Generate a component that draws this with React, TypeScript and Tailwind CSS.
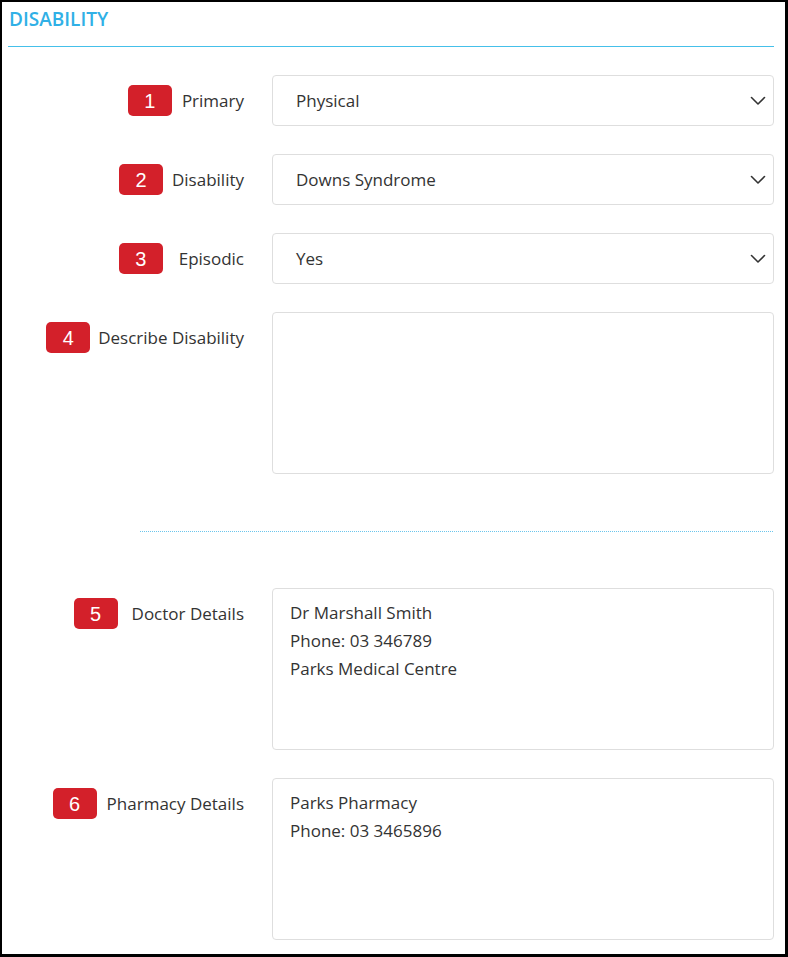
import React from "react";

const font = { fontFamily: '"Open Sans", "Noto Sans", sans-serif' };

function Badge({ n }: { n: number }) {
  return (
    <div
      className="flex h-[31px] w-[44px] items-center justify-center rounded-[5px] bg-[#d3202a] text-[20px] text-white"
      style={{ fontFamily: '"Liberation Sans", Arial, sans-serif' }}
    >
      {n}
    </div>
  );
}

function Label({ n, text, gap }: { n: number; text: string; gap: string }) {
  return (
    <div className="flex w-[242px] shrink-0 justify-end pt-[10px]">
      <div className={`flex h-[31px] items-center ${gap}`}>
        <Badge n={n} />
        <span className="text-[17px] text-[#333]">{text}</span>
      </div>
    </div>
  );
}

function Chevron() {
  return (
    <svg width="16" height="10" viewBox="0 0 16 10" fill="none">
      <path d="M1.5 1.5 L8 8 L14.5 1.5" stroke="#333" strokeWidth="1.6" strokeLinecap="round" strokeLinejoin="round" />
    </svg>
  );
}

function SelectRow({ n, label, value, gap, className }: { n: number; label: string; value: string; gap: string; className?: string }) {
  return (
    <div className={`flex items-start ${className ?? ""}`}>
      <Label n={n} text={label} gap={gap} />
      <div className="ml-[28px] flex h-[51px] w-[502px] items-center justify-between rounded-[4px] border border-[#dedede] pl-[23px] pr-[6px]">
        <span className="text-[17px] text-[#333]">{value}</span>
        <div className="mr-[1px] flex w-[16px] items-center"><Chevron /></div>
      </div>
    </div>
  );
}

function AreaRow({ n, label, lines, gap, className }: { n: number; label: string; lines: string[]; gap: string; className?: string }) {
  return (
    <div className={`flex items-start ${className ?? ""}`}>
      <Label n={n} text={label} gap={gap} />
      <div className="ml-[28px] h-[162px] w-[502px] rounded-[4px] border border-[#dedede] pl-[17px] pt-[10px]">
        {lines.map((l) => (
          <div key={l} className="text-[17px] leading-[28px] text-[#333]">{l}</div>
        ))}
      </div>
    </div>
  );
}

export default function App() {
  return (
    <div
      className="h-[957px] w-[788px] border-b-[3px] border-l-2 border-r-[3px] border-t-2 border-black bg-white"
      style={font}
    >
      <div className="pl-[7px] pt-[5px] text-[19px] font-semibold leading-[24px] text-[#30b0e6]">DISABILITY</div>
      <div className="ml-[6px] mt-[15px] h-px w-[766px] bg-[#45c0ea]" />
      <SelectRow className="mt-[28px]" n={1} label="Primary" value="Physical" gap="gap-[10px]" />
      <SelectRow className="mt-[28px]" n={2} label="Disability" value="Downs Syndrome" gap="gap-[9px]" />
      <SelectRow className="mt-[28px]" n={3} label="Episodic" value="Yes" gap="gap-[16px]" />
      <AreaRow className="mt-[28px]" n={4} label="Describe Disability" lines={[]} gap="gap-[8px]" />
      <div className="ml-[138px] mt-[57px] h-px w-[634px] bg-[linear-gradient(to_right,#6cc6ec_50%,transparent_50%)] bg-[length:2px_1px]" />
      <AreaRow className="mt-[56px]" n={5} label="Doctor Details" lines={["Dr Marshall Smith", "Phone: 03 346789", "Parks Medical Centre"]} gap="gap-[14px]" />
      <AreaRow className="mt-[28px]" n={6} label="Pharmacy Details" lines={["Parks Pharmacy", "Phone: 03 3465896"]} gap="gap-[10px]" />
    </div>
  );
}
